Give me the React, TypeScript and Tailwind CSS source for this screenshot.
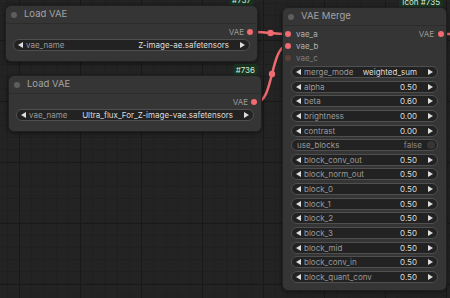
import React from 'react';

type Widget = { name: string; value: string; toggle?: boolean };

const MERGE_WIDGETS: Widget[] = [
  { name: 'merge_mode', value: 'weighted_sum' },
  { name: 'alpha', value: '0.50' },
  { name: 'beta', value: '0.60' },
  { name: 'brightness', value: '0.00' },
  { name: 'contrast', value: '0.00' },
  { name: 'use_blocks', value: 'false', toggle: true },
  { name: 'block_conv_out', value: '0.50' },
  { name: 'block_norm_out', value: '0.50' },
  { name: 'block_0', value: '0.50' },
  { name: 'block_1', value: '0.50' },
  { name: 'block_2', value: '0.50' },
  { name: 'block_3', value: '0.50' },
  { name: 'block_mid', value: '0.50' },
  { name: 'block_conv_in', value: '0.50' },
  { name: 'block_quant_conv', value: '0.50' },
];

function Arrow({ dir }: { dir: 'left' | 'right' }) {
  return (
    <svg width="5" height="6" viewBox="0 0 5 6" className="shrink-0">
      {dir === 'left' ? <path d="M5 0 L0 3 L5 6 Z" fill="#dddddd" /> : <path d="M0 0 L5 3 L0 6 Z" fill="#dddddd" />}
    </svg>
  );
}

function ComboWidget({ w }: { w: Widget }) {
  if (w.toggle) {
    return (
      <div className="h-[12px] flex items-center rounded-full border border-[#4f4f4f] bg-[#222222] pl-[5px] pr-[2px]">
        <span className="text-[#9a9a9a]">{w.name}</span>
        <span className="ml-auto text-[#8a8a8a]">{w.value}</span>
        <span className="ml-[5px] w-[8px] h-[8px] rounded-full bg-[#363636]"></span>
      </div>
    );
  }
  return (
    <div className="h-[12px] flex items-center rounded-full border border-[#4f4f4f] bg-[#222222] pl-[4px] pr-[4px]">
      <Arrow dir="left" />
      <span className="ml-[3px] text-[#9a9a9a] whitespace-nowrap">{w.name}</span>
      <span className="ml-auto text-[#dddddd] whitespace-nowrap">{w.value}</span>
      <span className="ml-[11px]"><Arrow dir="right" /></span>
    </div>
  );
}

function Badge({ text }: { text: string }) {
  return (
    <div className="absolute bottom-full right-[3px] mb-[1px] px-[3px] h-[11px] flex items-center rounded-[3px] bg-[#183220] text-[#d6ead8] text-[8px]">
      {text}
    </div>
  );
}

function Title({ title }: { title: string }) {
  return (
    <div className="h-[18px] flex items-center pl-[5px] border-b border-[#2c2c2c]">
      <span className="w-[6px] h-[6px] rounded-full bg-[#5e5e5e]"></span>
      <span className="ml-[7px] text-[9.5px] text-[#a3a3a3]">{title}</span>
    </div>
  );
}

function LoadVae({ className, file, id }: { className: string; file: string; id: string }) {
  return (
    <div className={`absolute z-10 rounded-[6px] bg-[#353535] border border-[#202020] shadow-[0_1px_4px_rgba(0,0,0,0.5)] ${className}`}>
      <Badge text={id} />
      <Title title="Load VAE" />
      <div className="px-[7px] pt-[3px] pb-[10px] flex flex-col gap-[2px]">
        <div className="h-[10px] flex items-center justify-end pr-[0px]">
          <span className="text-[#9a9a9a]">VAE</span>
          <span className="ml-[3px] mr-[-3px] w-[6px] h-[6px] rounded-full bg-[#f06b70]"></span>
        </div>
        <ComboWidget w={{ name: 'vae_name', value: file }} />
      </div>
    </div>
  );
}

function Slot({ name, dim }: { name: string; dim?: boolean }) {
  return (
    <div className="flex items-center">
      <span className={`w-[6px] h-[6px] rounded-full ${dim ? 'bg-[#5a4036]' : 'bg-[#f06b70]'}`}></span>
      <span className={`ml-[5px] ${dim ? 'text-[#7e7e7e]' : 'text-[#b0b0b0]'}`}>{name}</span>
    </div>
  );
}

export default function App() {
  return (
    <div className="relative w-[450px] h-[298px] overflow-hidden bg-[#232323] text-[8px] [font-family:Inter,sans-serif]">
      {/* canvas grid */}
      <div className="absolute inset-0 bg-[linear-gradient(to_right,#191919_1px,transparent_1px),linear-gradient(to_bottom,#191919_1px,transparent_1px),linear-gradient(to_right,#1f1f1f_1px,transparent_1px),linear-gradient(to_bottom,#1f1f1f_1px,transparent_1px)] bg-[size:61px_61px,61px_61px,12.2px_12.2px,12.2px_12.2px] bg-[position:19px_40px,19px_40px,7px_3px,7px_3px]"></div>

      {/* links */}
      <svg className="absolute inset-0 z-0" width="450" height="298">
        <path d="M254 32 C 268 32, 273 34, 287 34" stroke="#f06b70" strokeWidth="2.5" fill="none" />
        <circle cx="270.5" cy="33" r="3.2" fill="#f06b70" />
        <path d="M257 102 C 273 102, 271 46, 287 46" stroke="#f06b70" strokeWidth="2.5" fill="none" />
        <circle cx="272" cy="74" r="3.2" fill="#f06b70" />
        <path d="M442 34 L 452 34" stroke="#f06b70" strokeWidth="2.5" fill="none" />
      </svg>

      <LoadVae className="left-[5px] top-[5px] w-[253px]" file="Z-image-ae.safetensors" id="#737" />
      <LoadVae className="left-[8px] top-[75px] w-[254px]" file="Ultra_flux_For_Z-image-vae.safetensors" id="#736" />

      {/* VAE Merge */}
      <div className="absolute z-10 left-[282px] top-[7px] w-[165px] rounded-[6px] bg-[#353535] border border-[#202020] shadow-[0_1px_4px_rgba(0,0,0,0.5)]">
        <Badge text="Icon #735" />
        <Title title="VAE Merge" />
        <div className="pl-[2px] pr-[2px] pt-[2px]">
          <div className="h-[12px] flex items-center justify-between">
            <Slot name="vae_a" />
            <div className="flex items-center">
              <span className="text-[#9a9a9a]">VAE</span>
              <span className="ml-[4px] w-[6px] h-[6px] rounded-full bg-[#f06b70]"></span>
            </div>
          </div>
          <div className="h-[12px] flex items-center">
            <Slot name="vae_b" />
          </div>
          <div className="h-[12px] flex items-center">
            <Slot name="vae_c" dim />
          </div>
        </div>
        <div className="px-[8px] pt-[2px] pb-[7px] flex flex-col gap-[2.64px]">
          {MERGE_WIDGETS.map((w) => (
            <ComboWidget key={w.name} w={w} />
          ))}
        </div>
      </div>
    </div>
  );
}
